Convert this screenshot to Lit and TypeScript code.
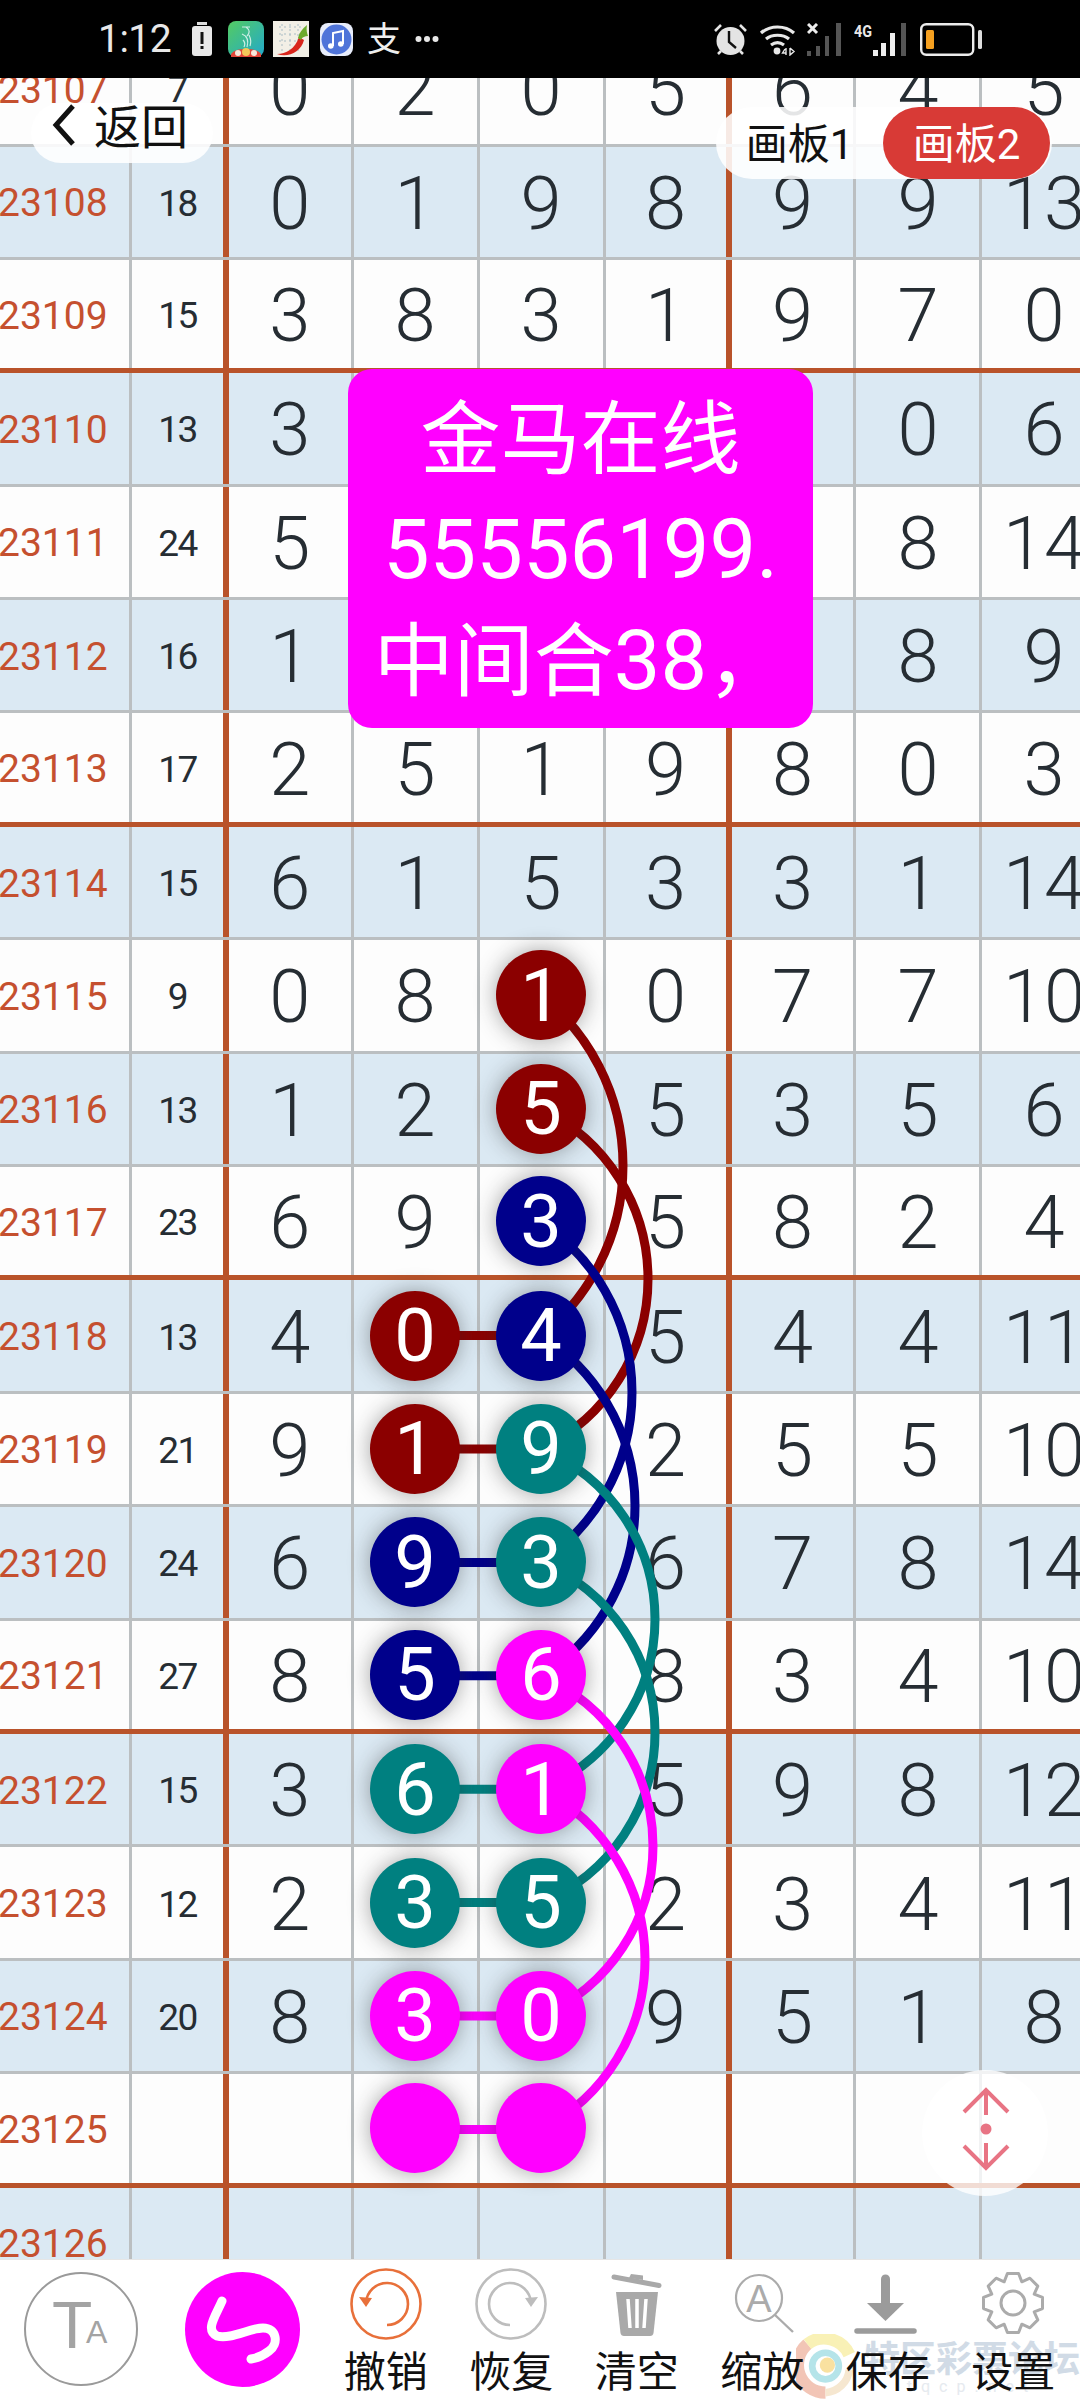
import { LitElement, html, css, svg } from 'lit';
import { customElement } from 'lit/decorators.js';

const ROW_H = 113.4;
const FIRST = 23107;

// issue, sum, then the seven drawn columns
const ROWS: (string | number)[][] = [
    [23107, 7, 0, 2, 0, 5, 6, 4, 5],
    [23108, 18, 0, 1, 9, 8, 9, 9, 13],
    [23109, 15, 3, 8, 3, 1, 9, 7, 0],
    [23110, 13, 3, '', '', '', '', 0, 6],
    [23111, 24, 5, '', '', '', '', 8, 14],
    [23112, 16, 1, '', '', '', '', 8, 9],
    [23113, 17, 2, 5, 1, 9, 8, 0, 3],
    [23114, 15, 6, 1, 5, 3, 3, 1, 14],
    [23115, 9, 0, 8, 1, 0, 7, 7, 10],
    [23116, 13, 1, 2, 5, 5, 3, 5, 6],
    [23117, 23, 6, 9, 3, 5, 8, 2, 4],
    [23118, 13, 4, 0, 4, 5, 4, 4, 11],
    [23119, 21, 9, 1, 9, 2, 5, 5, 10],
    [23120, 24, 6, 9, 3, 6, 7, 8, 14],
    [23121, 27, 8, 5, 6, 8, 3, 4, 10],
    [23122, 15, 3, 6, 1, 5, 9, 8, 12],
    [23123, 12, 2, 3, 5, 2, 3, 4, 11],
    [23124, 20, 8, 3, 0, 9, 5, 1, 8],
    [23125, '', '', '', '', '', '', '', ''],
    [23126, '', '', '', '', '', '', '', ''],
];

const COLORS: Record<string, string> = { red: '#8b0000', blue: '#00008b', teal: '#008080', mag: '#ff00ff' };

// balls in the 2nd and 3rd drawn columns, by issue
const LEFT_BALLS: Record<number, string> = {
    23118: 'red', 23119: 'red', 23120: 'blue', 23121: 'blue',
    23122: 'teal', 23123: 'teal', 23124: 'mag', 23125: 'mag',
};
const RIGHT_BALLS: Record<number, string> = {
    23115: 'red', 23116: 'red', 23117: 'blue', 23118: 'blue', 23119: 'teal', 23120: 'teal',
    23121: 'mag', 23122: 'mag', 23123: 'teal', 23124: 'mag', 23125: 'mag',
};

// each arc runs three rows down, reach is the x it bulges out to
const ARCS = [
    { from: 23115, color: 'red', reach: 623 },
    { from: 23116, color: 'red', reach: 648 },
    { from: 23117, color: 'blue', reach: 632 },
    { from: 23118, color: 'blue', reach: 635 },
    { from: 23119, color: 'teal', reach: 655 },
    { from: 23120, color: 'teal', reach: 655 },
    { from: 23121, color: 'mag', reach: 653 },
    { from: 23122, color: 'mag', reach: 645 },
];

const rowCenter = (issue: number) => (issue - FIRST + 0.5) * ROW_H - 1.5;

function gearPath(cx: number, cy: number, inner: number, outer: number, teeth: number) {
    const pts: string[] = [];
    const step = (Math.PI * 2) / teeth;
    for (let i = 0; i < teeth; i++) {
        const a = i * step - Math.PI / 2;
        [[-0.5, inner], [-0.24, outer], [0.24, outer], [0.5, inner]].forEach(([o, r]) => {
            const t = a + o * step;
            pts.push(`${(cx + r * Math.cos(t)).toFixed(1)} ${(cy + r * Math.sin(t)).toFixed(1)}`);
        });
    }
    return 'M' + pts.join('L') + 'Z';
}

@customElement('app-root')
export class AppRoot extends LitElement {
    static styles = css`
        :host {
            display: block;
            position: relative;
            width: 1080px;
            height: 2400px;
            overflow: hidden;
            background: #fff;
            font-family: Roboto, 'Noto Sans CJK SC', sans-serif;
        }

        .status {
            display: flex;
            align-items: center;
            height: 78px;
            padding: 0 98px;
            box-sizing: border-box;
            background: #000;
            color: #e8e8e8;
        }

        .status svg {
            display: block;
            flex: none;
        }

        .time {
            width: 73px;
            margin-right: 21px;
            font-size: 39px;
            letter-spacing: -0.5px;
            white-space: nowrap;
        }

        .zhi {
            width: 33px;
            margin: 0 15px 0 14px;
            font-size: 34px;
            line-height: 34px;
            color: #eee;
        }

        .status-right {
            display: flex;
            align-items: center;
            margin-left: auto;
        }

        .sheet {
            height: 2181px;
            overflow: hidden;
        }

        .grid {
            position: relative;
            margin-top: -44.9px;
            width: 1080px;
        }

        .row {
            display: grid;
            grid-template-columns: 132px 97px 124.5px 126px 126px 126.2px 124.8px 126px 126px;
            width: 1108px;
            height: 113.4px;
            box-sizing: border-box;
            background: #fdfdfd;
            border-bottom: 3px solid #bbbfc1;
        }

        .row.even {
            background: #dbe9f3;
        }

        .row.thick {
            border-bottom: 5px solid #b9532a;
        }

        .cell {
            display: flex;
            align-items: center;
            justify-content: center;
            padding-top: 3px;
            border-right: 3px solid #bbbfc1;
            font-size: 74px;
            font-weight: 350;
            color: #262d33;
            min-width: 0;
        }

        .cell.bar {
            border-right: 6px solid #b9532a;
        }

        .issue {
            justify-content: flex-start;
            font-size: 39px;
            font-weight: 400;
            color: #c5502f;
        }

        .issue span {
            margin-left: -2px;
        }

        .sum {
            font-size: 37px;
            font-weight: 400;
            letter-spacing: -1.5px;
        }

        .ball {
            position: relative;
            z-index: 2;
            display: flex;
            align-items: center;
            justify-content: center;
            flex: none;
            width: 90px;
            height: 90px;
            margin-top: -3px;
            border-radius: 50%;
            color: #fff;
            font-size: 74px;
            font-weight: 400;
            box-shadow: 0 0 22px rgba(40, 40, 40, 0.42);
        }

        .ball.red { background: #8b0000; }
        .ball.blue { background: #00008b; }
        .ball.teal { background: #008080; }
        .ball.mag { background: #ff00ff; }

        .links {
            position: absolute;
            left: 0;
            top: 0;
            z-index: 1;
            pointer-events: none;
        }

        .back {
            position: absolute;
            left: 31px;
            top: 103px;
            z-index: 5;
            display: flex;
            align-items: center;
            gap: 18px;
            width: 182px;
            height: 60px;
            padding: 0 0 16px 21px;
            box-sizing: border-box;
            border-radius: 30px;
            background: rgba(255, 255, 255, 0.88);
            color: #111;
            font-size: 47px;
        }

        .back span {
            margin-top: -4px;
        }

        .boards {
            position: absolute;
            left: 716px;
            top: 107px;
            z-index: 5;
            display: flex;
            width: 336px;
            height: 72px;
            border-radius: 36px;
            background: rgba(255, 255, 255, 0.88);
            font-size: 42px;
            color: #111;
        }

        .boards span {
            display: flex;
            align-items: center;
            justify-content: center;
            width: 167px;
            padding-bottom: 5px;
            box-sizing: border-box;
            border-radius: 36px;
        }

        .boards .on {
            background: #d83a36;
            color: #fff;
        }

        .note {
            position: absolute;
            left: 348px;
            top: 369px;
            z-index: 4;
            width: 465px;
            height: 359px;
            padding-top: 16px;
            box-sizing: border-box;
            border-radius: 24px;
            background: #ff00ff;
            color: #fff;
            font-size: 80px;
            line-height: 110px;
            text-align: center;
            white-space: nowrap;
        }

        .note .num {
            font-size: 83px;
        }

        .handle {
            position: absolute;
            left: 922px;
            top: 2070px;
            z-index: 5;
            width: 126px;
            height: 126px;
            border-radius: 50%;
            background: rgba(255, 255, 255, 0.8);
        }

        .bar-bottom {
            position: relative;
            display: flex;
            height: 141px;
            box-sizing: border-box;
            border-top: 1px solid #e6e6e6;
            background: #fff;
        }

        .ta {
            position: relative;
            flex: none;
            width: 114px;
            height: 114px;
            margin: 12px 47px 0 24px;
            box-sizing: border-box;
            border: 2px solid #9a9a9a;
            border-radius: 50%;
            color: #a3a3a3;
            font-family: 'Liberation Sans', sans-serif;
        }

        .ta b {
            position: absolute;
            left: 26px;
            top: 18px;
            font-size: 66px;
            line-height: 66px;
            font-weight: 400;
        }

        .ta i {
            position: absolute;
            left: 60px;
            top: 41px;
            font-size: 32px;
            line-height: 34px;
            font-style: normal;
        }

        .pen {
            flex: none;
            width: 115px;
            height: 115px;
            margin: 12px 23px 0 0;
            border-radius: 50%;
            background: #ff00ff;
        }

        .tools {
            display: grid;
            grid-template-columns: repeat(6, 125.5px);
        }

        .tool {
            position: relative;
            z-index: 2;
            display: flex;
            flex-direction: column;
            align-items: center;
            padding-top: 7px;
            font-size: 42px;
            line-height: 50px;
            color: #111;
        }

        .tool svg {
            display: block;
            margin-bottom: 3px;
        }

        .mark {
            position: absolute;
            left: 796px;
            top: 74px;
            z-index: 1;
            display: flex;
            align-items: flex-start;
            width: 284px;
            height: 66px;
            overflow: hidden;
            opacity: 0.85;
        }

        .mark-text {
            margin: 8px 0 0 9px;
            color: #c9d5e2;
            font-size: 36px;
            line-height: 36px;
            font-weight: 700;
            white-space: nowrap;
        }

        .mark-sub {
            display: block;
            margin-top: 1px;
            color: #e2e7ed;
            font-size: 16px;
            line-height: 16px;
            font-weight: 400;
            letter-spacing: 9px;
            text-align: center;
        }
    `;

    private statusLeft() {
        return html`
            <svg width="20" height="34" viewBox="0 0 20 34">
                <rect x="5" y="0" width="10" height="3" fill="#ddd" />
                <rect x="0" y="4" width="20" height="30" rx="3" fill="#e8e8e8" />
                <rect x="8.5" y="10" width="3" height="12" fill="#111" />
                <rect x="8.5" y="24" width="3" height="3" fill="#111" />
            </svg>
            <svg style="margin-left:16px" width="36" height="36" viewBox="0 0 36 36">
                <defs>
                    <linearGradient id="g1" x1="0" y1="0" x2="1" y2="1">
                        <stop offset="0" stop-color="#54cb62" />
                        <stop offset="1" stop-color="#22a9cc" />
                    </linearGradient>
                </defs>
                <rect width="36" height="36" rx="8" fill="url(#g1)" />
                <path d="M14 6h8M18 6c4 3 4 6 1 9M14 13c5 2 7 6 5 13M21 14c2 4 2 8 1 11M15 19c2 2 2 5 1 7" fill="none" stroke="#cdeee4" stroke-width="1.2" />
                <path d="M3 33c3-4 8-5 15-5s12 1 15 5v3H3z" fill="#e2473a" />
                <circle cx="18" cy="31" r="4" fill="#f4c95a" />
                <circle cx="10" cy="32" r="3" fill="#f6e9dc" />
                <circle cx="26" cy="32" r="3" fill="#f6e9dc" />
            </svg>
            <svg style="margin-left:9px" width="36" height="36" viewBox="0 0 36 36">
                <rect width="36" height="36" fill="#f2efe6" />
                <path d="M6 6h24M6 13h24M6 20h24M9 3v30M17 3v30M25 3v30" stroke="#a9bcc4" stroke-width="1" stroke-dasharray="2 3" fill="none" />
                <path d="M4 33c9 0 18-5 22-17l5 3C28 31 15 37 4 33z" fill="#d9261c" />
                <path d="M25 17c1-5 4-9 9-13-1 5 0 8 1 11-3 0-6 1-7 4z" fill="#6cab2c" />
            </svg>
            <svg style="margin-left:11px" width="33" height="33" viewBox="0 0 33 33">
                <rect width="33" height="33" rx="8" fill="#e8edfb" />
                <circle cx="16.5" cy="16.5" r="15" fill="#4f74d9" />
                <path d="M13 23V10l10-2v13" fill="none" stroke="#fff" stroke-width="2" />
                <circle cx="10.8" cy="23" r="2.8" fill="#fff" />
                <circle cx="20.8" cy="21" r="2.8" fill="#fff" />
            </svg>
            <span class="zhi">支</span>
            <svg width="24" height="8" viewBox="0 0 24 8">
                <circle cx="3.5" cy="4" r="3" fill="#e8e8e8" />
                <circle cx="12" cy="4" r="3" fill="#e8e8e8" />
                <circle cx="20.5" cy="4" r="3" fill="#e8e8e8" />
            </svg>
        `;
    }

    private statusRight() {
        return html`
            <div class="status-right">
                <svg width="35" height="33" viewBox="0 0 35 33">
                    <circle cx="17.5" cy="18" r="14" fill="#e4e4e4" />
                    <path d="M16 8v11l7 6" fill="none" stroke="#111" stroke-width="2.4" />
                    <path d="M2 8l6-6M33 8l-6-6M5 31l3-3M30 31l-3-3" stroke="#e4e4e4" stroke-width="2.6" fill="none" />
                </svg>
                <svg style="margin-left:11px" width="37" height="33" viewBox="0 0 37 33">
                    <path d="M2 10c9-8 24-8 33 0M7 16c6-5 17-5 23 0M12 22c4-3 9-3 13 0" fill="none" stroke="#e8e8e8" stroke-width="3.2" />
                    <circle cx="18" cy="28" r="3.4" fill="#e8e8e8" />
                    <path d="M26 26l-2.5 4h3.5M27 25v7M31 25v7l4-3.5-4-3.5" fill="none" stroke="#e8e8e8" stroke-width="1.4" />
                </svg>
                <svg style="margin-left:11px" width="36" height="33" viewBox="0 0 36 33">
                    <path d="M1 1l9 9M10 1l-9 9" stroke="#ececec" stroke-width="3" />
                    <rect x="0" y="28" width="4" height="5" fill="#555" />
                    <rect x="9" y="23" width="4" height="10" fill="#555" />
                    <rect x="18" y="13" width="4" height="20" fill="#555" />
                    <rect x="29" y="0" width="5" height="33" fill="#555" />
                </svg>
                <svg style="margin-left:11px" width="53" height="33" viewBox="0 0 53 33">
                    <text x="0" y="14" font-family="Roboto, sans-serif" font-size="17" font-weight="700" textLength="18" lengthAdjust="spacingAndGlyphs" fill="#e8e8e8">4G</text>
                    <rect x="19" y="27" width="5" height="6" fill="#eee" />
                    <rect x="27" y="20" width="5" height="13" fill="#eee" />
                    <rect x="36" y="10" width="5" height="23" fill="#eee" />
                    <rect x="47" y="0" width="5" height="33" fill="#555" />
                </svg>
                <svg style="margin-left:13px" width="62" height="33" viewBox="0 0 62 33">
                    <rect x="1.2" y="1.2" width="52" height="30.6" rx="5" fill="none" stroke="#ececec" stroke-width="2.4" />
                    <rect x="6" y="7" width="8" height="19" rx="1.5" fill="#f5a020" />
                    <rect x="58" y="7" width="4" height="19" rx="1.5" fill="#ddd" />
                </svg>
            </div>
        `;
    }

    private cell(value: string | number, col: number, issue: number) {
        const ball = col === 3 ? LEFT_BALLS[issue] : col === 4 ? RIGHT_BALLS[issue] : undefined;
        const cls = col === 5 ? 'cell bar' : 'cell';
        if (col === 0) return html`<div class="cell issue"><span>${value}</span></div>`;
        if (col === 1) return html`<div class="cell bar sum">${value}</div>`;
        return html`<div class=${cls}>${ball ? html`<span class="ball ${ball}">${value}</span>` : value}</div>`;
    }

    private links() {
        const height = ROWS.length * ROW_H;
        return html`
            <svg class="links" width="1080" height=${height} viewBox="0 0 1080 ${height}">
                ${Object.entries(LEFT_BALLS).map(([issue, color]) => {
                    const y = rowCenter(Number(issue));
                    return svg`<line x1="415" y1=${y} x2="541" y2=${y} stroke=${COLORS[color]} stroke-width="9" />`;
                })}
                ${ARCS.map(({ from, color, reach }) => {
                    const y1 = rowCenter(from);
                    const y2 = rowCenter(from + 3);
                    const h = (y2 - y1) / 2;
                    const b = reach - 541;
                    const r = (h * h + b * b) / (2 * b);
                    return svg`<path d="M541 ${y1}A${r} ${r} 0 0 1 541 ${y2}" fill="none" stroke=${COLORS[color]} stroke-width="9" />`;
                })}
            </svg>
        `;
    }

    private toolIcon(name: string) {
        const gray = '#a9a9a9';
        switch (name) {
            case 'undo':
                return svg`
                    <circle cx="50" cy="37" r="34.5" fill="none" stroke="#e8703a" stroke-width="2.6" />
                    <path d="M51 58A21 21 0 1 0 30 36" fill="none" stroke="#e8703a" stroke-width="2.6" />
                    <path d="M23 30l7 10 6-9z" fill="#e8703a" />`;
            case 'redo':
                return svg`
                    <circle cx="50" cy="37" r="34.5" fill="none" stroke="#bdbdbd" stroke-width="2.6" />
                    <path d="M49 58A21 21 0 1 1 70 36" fill="none" stroke="#bdbdbd" stroke-width="2.6" />
                    <path d="M77 30l-7 10-6-9z" fill="#bdbdbd" />`;
            case 'trash':
                return svg`
                    <path d="M29 25H71L66.500 66Q66 69 63 69H37Q34 69 33.500 66Z" fill=${gray} />
                    <path d="M41 32L43 61M50 32V61M59 32L57 61" stroke="#fff" stroke-width="3.500" />
                    <path d="M27 10L72 18.500" stroke=${gray} stroke-width="5" stroke-linecap="round" />
                    <path d="M42 11L44 7L56 8.500L56 13" fill=${gray} />`;
            case 'zoom':
                return svg`
                    <circle cx="47" cy="31" r="23" fill="none" stroke="#ababab" stroke-width="2.200" />
                    <path d="M63 48L81 65" stroke="#ababab" stroke-width="2.400" />
                    <text x="47" y="45" text-anchor="middle" font-family="Liberation Sans, sans-serif" font-size="38" fill="#ababab">A</text>`;
            case 'save':
                return svg`
                    <path d="M47.500 12V38" stroke="#9b9b9b" stroke-width="9" stroke-linecap="round" />
                    <path d="M29 36H66L47.500 54Z" fill="#9b9b9b" />
                    <path d="M19 64H76" stroke="#9b9b9b" stroke-width="5.500" stroke-linecap="round" />`;
            default:
                return svg`
                    <path d=${gearPath(50, 36, 23, 30, 8)} fill="none" stroke="#ababab" stroke-width="3" stroke-linejoin="round" />
                    <circle cx="50" cy="36" r="12" fill="none" stroke="#ababab" stroke-width="3" />`;
        }
    }

    render() {
        const tools = [
            ['undo', '撤销'], ['redo', '恢复'], ['trash', '清空'],
            ['zoom', '缩放'], ['save', '保存'], ['gear', '设置'],
        ];
        return html`
            <div class="status">
                <span class="time">1:12</span>
                ${this.statusLeft()}
                ${this.statusRight()}
            </div>

            <div class="sheet">
                <div class="grid">
                    ${ROWS.map((row) => {
                        const issue = Number(row[0]);
                        const thick = (issue - 23109) % 4 === 0 && issue >= 23109;
                        return html`
                            <div class="row ${issue % 2 === 0 ? 'even' : ''} ${thick ? 'thick' : ''}">
                                ${row.map((v, col) => this.cell(v, col, issue))}
                            </div>`;
                    })}
                    ${this.links()}
                </div>
            </div>

            <div class="back">
                <svg width="24" height="42" viewBox="0 0 24 42">
                    <path d="M21 2L4 21L21 40" fill="none" stroke="#111" stroke-width="5" />
                </svg>
                <span>返回</span>
            </div>

            <div class="boards">
                <span>画板1</span>
                <span class="on">画板2</span>
            </div>

            <div class="note">金马在线<br /><span class="num">55556199.</span><br />中间合<span class="num">38</span>，</div>

            <div class="handle">
                <svg width="126" height="126" viewBox="0 0 126 126">
                    <path d="M42 42L64 20L86 42M64 20V45M42 76L64 98L86 76M64 73V98" fill="none" stroke="#e87484" stroke-width="4" />
                    <circle cx="64" cy="59" r="5.500" fill="#e87484" />
                </svg>
            </div>

            <div class="bar-bottom">
                <div class="ta"><b>T</b><i>A</i></div>
                <div class="pen">
                    <svg width="115" height="115" viewBox="0 0 115 115">
                        <path d="M37 29C30 45 20 58 32 64C45 68 65 56 78 56C92 56 94 72 84 79C78 84 72 86 66 87" fill="none" stroke="#fff" stroke-width="9" stroke-linecap="round" />
                    </svg>
                </div>
                <div class="tools">
                    ${tools.map(([name, label]) => html`
                        <div class="tool">
                            <svg width="100" height="78" viewBox="0 0 100 78">${this.toolIcon(name)}</svg>
                            <span>${label}</span>
                        </div>`)}
                </div>
                <div class="mark">
                    <svg width="62" height="66" viewBox="0 0 62 66">
                        <path d="M31 60A29 29 0 0 1 12 9" fill="none" stroke="#f0bcaa" stroke-width="13" />
                        <path d="M12 9A29 29 0 0 1 56 20" fill="none" stroke="#f8efaa" stroke-width="13" />
                        <path d="M56 36A27 27 0 0 1 31 60" fill="none" stroke="#f5e3c8" stroke-width="8" />
                        <circle cx="31" cy="32" r="14" fill="none" stroke="#a9e0e6" stroke-width="7" />
                        <circle cx="33" cy="31" r="8" fill="#f8dc90" />
                    </svg>
                    <div class="mark-text">
                        特区彩票论坛
                        <span class="mark-sub">tqcp.net</span>
                    </div>
                </div>
            </div>
        `;
    }
}

declare global {
    interface HTMLElementTagNameMap {
        'app-root': AppRoot;
    }
}
